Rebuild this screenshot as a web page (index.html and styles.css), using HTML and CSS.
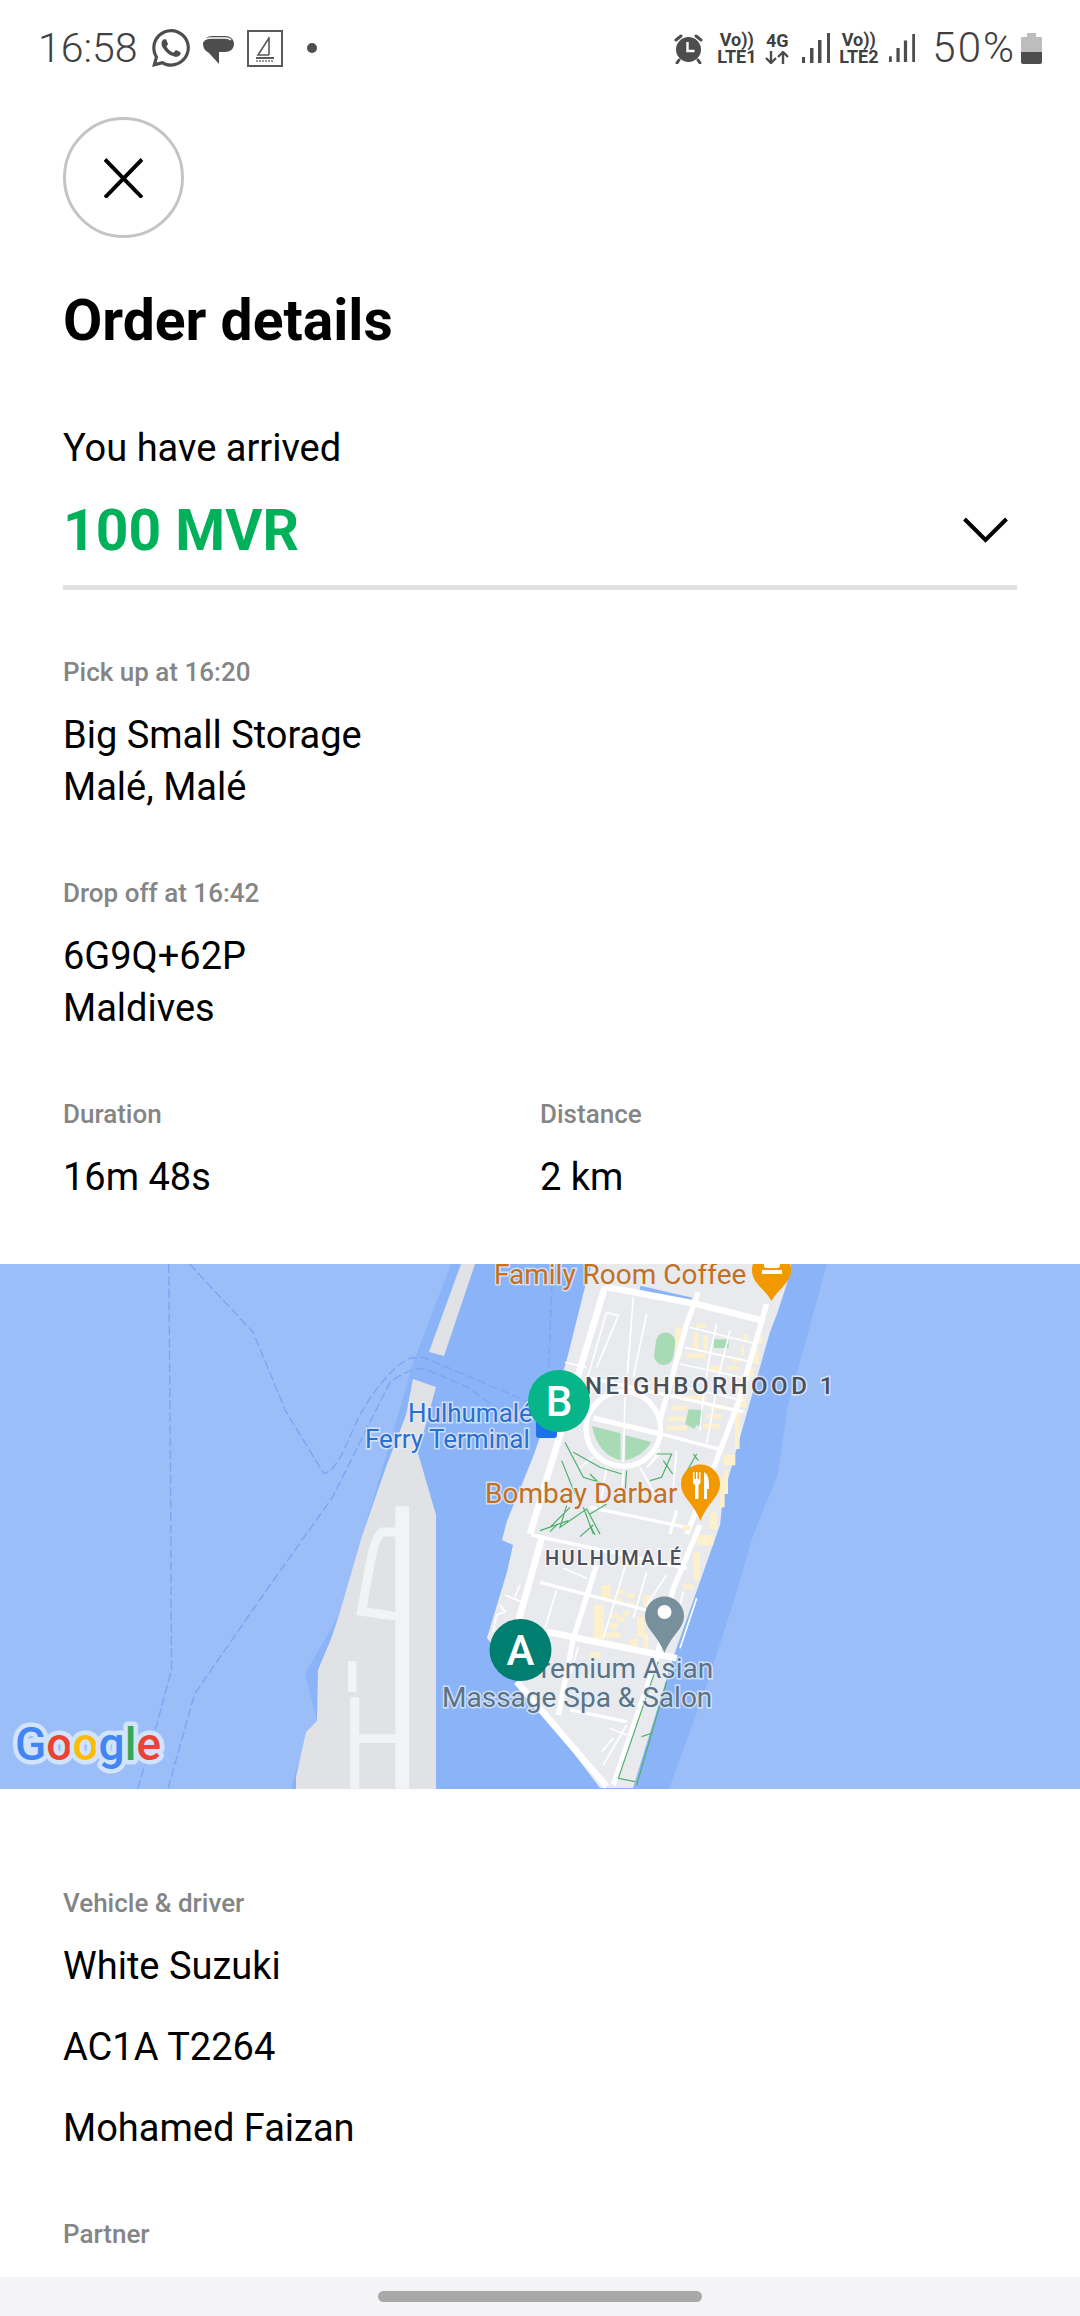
FILE: index.html
```html
<!DOCTYPE html>
<html>
  <head>
    <title>Order details</title>
    <link rel="stylesheet" href="styles.css">
  </head>

  <body>
    <!-- phone status bar -->
    <div class="status">
      <div class="status-left">
        <span class="clock">16:58</span>
        <svg class="ic-wa" viewBox="2 2 20 20"><path fill="#4d4d4d" d="M12.04 2C6.58 2 2.13 6.45 2.13 11.91C2.13 13.66 2.59 15.36 3.45 16.86L2.05 22L7.3 20.62C8.75 21.41 10.38 21.83 12.04 21.83C17.5 21.83 21.95 17.38 21.95 11.92C21.95 9.27 20.92 6.78 19.05 4.91C17.18 3.03 14.69 2 12.04 2M12.05 3.67C14.25 3.67 16.31 4.53 17.87 6.09C19.42 7.65 20.28 9.72 20.28 11.92C20.28 16.46 16.58 20.15 12.04 20.15C10.56 20.15 9.11 19.76 7.85 19L7.55 18.83L4.43 19.65L5.26 16.61L5.06 16.29C4.24 15 3.8 13.47 3.8 11.91C3.81 7.37 7.5 3.67 12.05 3.67M8.53 7.33C8.37 7.33 8.1 7.39 7.87 7.64C7.65 7.89 7 8.5 7 9.71C7 10.93 7.89 12.1 8 12.27C8.14 12.44 9.76 14.94 12.25 16C12.84 16.27 13.3 16.42 13.66 16.53C14.25 16.72 14.79 16.69 15.22 16.63C15.7 16.56 16.68 16.03 16.89 15.45C17.1 14.87 17.1 14.38 17.04 14.27C16.97 14.17 16.81 14.11 16.56 14C16.31 13.86 15.09 13.26 14.87 13.18C14.64 13.1 14.5 13.06 14.31 13.3C14.15 13.55 13.67 14.11 13.53 14.27C13.38 14.44 13.24 14.46 13 14.34C12.74 14.21 11.94 13.95 11 13.11C10.26 12.45 9.77 11.64 9.62 11.39C9.5 11.15 9.61 11 9.73 10.89C9.84 10.78 10 10.6 10.1 10.45C10.23 10.31 10.27 10.2 10.35 10.04C10.43 9.87 10.39 9.73 10.33 9.61C10.27 9.5 9.77 8.26 9.56 7.77C9.36 7.29 9.16 7.35 9 7.34C8.86 7.34 8.7 7.33 8.53 7.33Z"/></svg>
        <svg class="ic-msg" viewBox="0 0 32 32"><path fill="#4d4d4d" d="M10 3h13c5 0 9 3 9 8s-4 8-9 8h-6v12l-10-11C3 18 1 15 1 11c0-5 4-8 9-8z"/><path fill="none" stroke="#fff" stroke-width="1.4" d="M1 9c1-3 4-4 8-4h14c3 0 5 1 6 2"/></svg>
        <svg class="ic-boat" viewBox="0 0 36 37"><rect x="1" y="1" width="34" height="35" fill="#fff" stroke="#5a5a5a" stroke-width="2"/><path fill="none" stroke="#5a5a5a" stroke-width="1.6" d="M22 7v18M22 8 11 25h11"/><path fill="none" stroke="#5a5a5a" stroke-width="2" d="M9 28h18"/><path fill="none" stroke="#9a9a9a" stroke-width="2" stroke-dasharray="2 1" d="M9 31h18"/></svg>
        <span class="dot"></span>
      </div>
      <div class="status-right">
        <svg class="ic-alarm" viewBox="0 0 29 31"><circle cx="14.5" cy="16.5" r="12.5" fill="#4d4d4d"/><path fill="none" stroke="#fff" stroke-width="2.4" d="M13.5 9v9h7"/><path fill="none" stroke="#4d4d4d" stroke-width="3" stroke-linecap="round" d="M2 7l5-4M27 7l-5-4M5 27l-2 3M24 27l2 3"/></svg>
        <div class="net"><span>Vo))</span><span>LTE1</span></div>
        <div class="net net-g">
          <span>4G</span>
          <svg class="arrows" viewBox="0 0 24 13"><path fill="none" stroke="#4d4d4d" stroke-width="2.400" d="M6 0v12M1 7l5 5 5-5M18 13V1M13 6l5-5 5 5"/></svg>
        </div>
        <svg class="ic-sig" viewBox="0 0 28 30"><path fill="#4d4d4d" d="M0 24h3v6H0zM8 15h3.500v15H8zM16 7h3.500v23H16zM25 0h3v30h-3z"/></svg>
        <div class="net net-2"><span>Vo))</span><span>LTE2</span></div>
        <svg class="ic-sig ic-sig2" viewBox="0 0 28 30"><path fill="#4d4d4d" d="M0 24h3v6H0zM8 15h3.500v15H8zM16 7h3.500v23H16zM25 0h3v30h-3z"/></svg>
        <span class="pct">50%</span>
        <svg class="ic-batt" viewBox="0 0 21 31"><path fill="#bdbdbd" d="M6 0h9v4h5a1 1 0 0 1 1 1v14H0V5a1 1 0 0 1 1-1h5z"/><path fill="#4d4d4d" d="M0 19h21v10a2 2 0 0 1-2 2H2a2 2 0 0 1-2-2z"/></svg>
      </div>
    </div>

    <div class="page">
      <div class="top">
        <div class="close">
          <svg viewBox="0 0 40 40"><path fill="none" stroke="#000" stroke-width="4" d="M1 1l38 39M39 1L1 40"/></svg>
        </div>
        <h1 class="title">Order details</h1>
        <div class="arrived">You have arrived</div>
        <div class="price-row">
          <span class="price">100 MVR</span>
          <svg class="chev" viewBox="0 0 44 26"><path fill="none" stroke="#000" stroke-width="4" d="M1 2l21 21L43 2"/></svg>
        </div>
      </div>

      <div class="info">
        <div class="block">
          <div class="label">Pick up at 16:20</div>
          <div class="val">Big Small Storage<br>Malé, Malé</div>
        </div>
        <div class="block">
          <div class="label">Drop off at 16:42</div>
          <div class="val">6G9Q+62P<br>Maldives</div>
        </div>
        <div class="two">
          <div>
            <div class="label">Duration</div>
            <div class="val">16m 48s</div>
          </div>
          <div>
            <div class="label">Distance</div>
            <div class="val">2 km</div>
          </div>
        </div>
      </div>

      <!-- map -->
      <svg class="map" viewBox="0 0 1080 525">
        <rect class="water" width="1080" height="525"/>
        <path class="deep" d="M451 0L413 99L389 182L362 272L339 351L305 410L317 457L296 506L291 525H669L705 426L733 340L753 272L778 210L788 141L827 0z"/>

        <g class="ferry" transform="translate(0 -4.100) scale(.3444)">
          <path d="M490 12L495 600L498 1190L455 1350L400 1535"/>
          <path d="M550 12L735 210L830 440L940 620Q960 620 990 570L1045 450Q1120 320 1190 285L1230 283L1530 410"/>
          <path d="M488 1535L565 1260L780 950L965 690L1055 510L1130 360Q1170 320 1230 315L1360 370L1420 415"/>
          <path d="M1603 70L1593 310"/>
        </g>

        <!-- airport island -->
        <path class="land2" d="M461 0H475L444 92L429 88z"/>
        <path class="land2" d="M413 115L436 123L418 189L436 251V525H296V513L306 468L317 457L318 406L331 375L339 351L362 272L386 203L406 151z"/>
        <g class="apron" transform="translate(0 -4.100) scale(.3444)">
          <path d="M1168 715V1535"/>
          <path d="M1150 790H1110Q1090 800 1075 880L1050 1020L1150 1035"/>
          <path d="M1030 1270V1535M1030 1390H1150"/>
          <path class="apron-b" d="M1010 1210H1035"/>
        </g>

        <!-- hulhumale island -->
        <path class="land" d="M592 0L585 23L566 99L533 193L507 257L502 276L513 281L507 308L500 331L487 374L600 524H633L673 394L720 261L723 233L770 68L777 50L790 10L791 0z"/>

        <g transform="translate(490 0) scale(.3333)">
          <path class="pond" d="M450 72L605 108M640 125L795 165"/>
          <rect class="park" x="495" y="205" width="58" height="98" rx="29" transform="rotate(8 524 254)"/>
          <g class="build">
            <rect x="618" y="178" width="30" height="14"/><rect x="612" y="205" width="14" height="50"/><rect x="640" y="215" width="14" height="50"/>
            <rect x="590" y="268" width="56" height="14"/><rect x="660" y="305" width="34" height="20"/><rect x="725" y="280" width="28" height="14"/>
            <rect x="712" y="305" width="34" height="12"/><rect x="760" y="210" width="14" height="22"/><rect x="752" y="245" width="10" height="28"/>
            <rect x="792" y="255" width="14" height="44"/><rect x="805" y="215" width="12" height="24"/><rect x="775" y="310" width="14" height="30"/>
            <rect x="545" y="425" width="44" height="14"/><rect x="535" y="458" width="50" height="14"/><rect x="530" y="485" width="60" height="14"/>
            <rect x="660" y="422" width="46" height="14"/><rect x="650" y="450" width="44" height="14"/><rect x="640" y="480" width="48" height="14"/>
            <rect x="568" y="395" width="80" height="14"/><rect x="745" y="400" width="24" height="30"/><rect x="735" y="445" width="14" height="110"/>
            <rect x="700" y="572" width="36" height="32"/><rect x="700" y="620" width="14" height="70"/><rect x="660" y="745" width="20" height="50"/>
            <rect x="555" y="190" width="22" height="90"/><rect x="690" y="640" width="14" height="90"/>
          </g>
          <rect class="park" x="672" y="226" width="44" height="26"/>
          <path class="park" d="M586 480L596 436L640 438L634 488L620 484L612 494z"/>
          <path class="road" d="M345 68L120 810"/>
          <path class="road" d="M345 68L620 120L820 170"/>
          <path class="road r2" d="M625 85L590 180L510 470"/>
          <path class="road r2" d="M830 120L810 190L740 430L660 640L590 810"/>
          <circle class="ring" cx="400" cy="495" r="112"/>
          <path class="park" d="M306 486L392 508V588Q325 575 306 486z"/>
          <path class="park" d="M406 514L484 534Q455 580 406 588z"/>
          <path class="road r2" d="M310 462L512 510"/>
          <path class="road r4" d="M405 400L400 595"/>
          <path class="road r3" d="M512 510L690 556"/>
          <path class="road r3" d="M290 340L760 444"/>
          <path class="road r4" d="M600 190L800 240M585 250L790 295M570 300L780 345M545 360L760 410"/>
          <path class="road r4" d="M350 145L385 155L320 310M430 100L412 330M470 150L430 340M350 145L290 350"/>
          <path class="road r4" d="M680 180L660 270L640 400L630 500M720 200L690 320L650 540M225 295L290 310"/>
          <path class="road r3" d="M300 730L590 790M560 740L540 810"/>
          <path class="road r4" d="M450 610L500 700M350 610L330 730M510 555L480 600M560 560L545 720M400 620L395 720M270 610L310 580M470 610L510 570"/>
          <path class="trail" d="M225 535L280 640L345 660M250 565L330 610L395 630M215 590L255 690M300 630L330 660M500 570L545 570L515 640L480 650M520 590L548 630M410 620L405 690M575 650L620 570M610 570L625 590M230 725L210 790L290 735L330 810M280 730L310 810M150 800L235 770M180 790L240 730M350 720L300 750"/>
        </g>

        <g transform="translate(470 261) scale(.3333)">
          <g class="build">
            <rect x="395" y="180" width="26" height="44"/><rect x="440" y="195" width="24" height="14"/><rect x="470" y="205" width="24" height="14"/>
            <rect x="430" y="218" width="26" height="14"/><rect x="470" y="232" width="24" height="14"/><rect x="372" y="240" width="30" height="105"/>
            <rect x="420" y="265" width="26" height="14"/><rect x="460" y="258" width="20" height="14"/><rect x="418" y="295" width="26" height="16"/>
            <rect x="440" y="275" width="24" height="14"/><rect x="408" y="322" width="44" height="16"/><rect x="502" y="275" width="22" height="60"/>
            <rect x="480" y="342" width="24" height="36"/><rect x="398" y="346" width="22" height="12"/><rect x="360" y="380" width="30" height="20"/>
            <rect x="520" y="210" width="20" height="36"/><rect x="680" y="30" width="50" height="30"/><rect x="670" y="80" width="20" height="85"/>
            <rect x="640" y="178" width="32" height="14"/><rect x="640" y="0" width="20" height="16"/><rect x="520" y="325" width="14" height="60"/>
          </g>
          <path class="road" d="M215 40L145 290"/>
          <path class="road r2" d="M380 120L310 340L265 570"/>
          <path class="road r2" d="M690 0L610 190L560 400L430 780"/>
          <path class="road" d="M140 470L410 785"/>
          <path class="road r3" d="M185 30L650 130"/>
          <path class="road r3" d="M210 172L540 258"/>
          <path class="road" d="M230 320L620 400"/>
          <path class="road r3" d="M300 555L470 590"/>
          <path class="road r4" d="M260 195L225 310M470 110L400 340M530 140L490 280M280 130L350 160M590 150L530 240M105 210L165 235M150 180L135 215M90 240L105 260L80 270L70 320"/>
          <path class="road r4" d="M470 600L400 720M420 610L470 630M395 680L430 640"/>
          <path class="road r4" d="M325 365L300 450M640 200L605 340M680 220L630 370"/>
          <path class="trail" d="M240 20L260 0M330 35L370 0M360 0L375 30M565 410L445 760L495 770M590 470L500 780M515 635L545 625"/>
        </g>

        <!-- map labels -->
        <text class="lbl food" x="494" y="20">Family Room Coffee</text>
        <path class="pin-o" d="M752 6a19.500 19.500 0 0 1 39 0c0 13-12 18-19.500 31C764 24 752 19 752 6z"/>
        <path class="glyph" d="M762 6h20v4h-20zM764 0h16v2q-1 2-3 2h-10q-3 0-3-2z"/>
        <text class="lbl blue" x="408" y="158">Hulhumalé</text>
        <text class="lbl blue" x="365" y="184">Ferry Terminal</text>
        <rect x="536" y="156" width="21" height="18" rx="3" fill="#1a73e8"/>
        <text class="lbl food" x="485" y="239">Bombay Darbar</text>
        <text class="area area-b" x="585" y="130">NEIGHBORHOOD 1</text>
        <text class="area area-s" x="545" y="301">HULHUMALÉ</text>
        <text class="lbl slate" x="523" y="414">Premium Asian</text>
        <text class="lbl slate" x="442" y="443">Massage Spa &amp; Salon</text>

        <!-- pins -->
        <path class="pin-o" d="M681 220a19.500 19.500 0 0 1 39 0c0 13-12 18-19.500 37C693 238 681 233 681 220z"/>
        <path class="glyph" d="M693 208h1.500v7h1.500v-7h1.500v7h1.500v-7h1.500v10q0 2-2 3v14h-3.500v-14q-2-1-2-3zM704 208q5 2 5 14v3h-2v10h-3z"/>
        <path class="pin-g" d="M645 352a19.500 19.500 0 0 1 39 0c0 13-12 18-19.500 37C657 370 645 365 645 352z"/>
        <circle cx="664.500" cy="348" r="7" fill="#fff"/>

        <circle cx="520.500" cy="386" r="31" fill="#007e70"/>
        <text class="mark" x="520.500" y="401">A</text>
        <circle cx="559" cy="137" r="31" fill="#07b58a"/>
        <text class="mark" x="559" y="152">B</text>

        <text class="goog" transform="translate(15 496)"><tspan fill="#4285f4">G</tspan><tspan fill="#ea4335">o</tspan><tspan fill="#fbbc05">o</tspan><tspan fill="#4285f4">g</tspan><tspan fill="#34a853">l</tspan><tspan fill="#ea4335">e</tspan></text>
      </svg>

      <div class="info info-b">
        <div class="label">Vehicle &amp; driver</div>
        <div class="val val-row">White Suzuki</div>
        <div class="val val-row">AC1A T2264</div>
        <div class="val val-row">Mohamed Faizan</div>
        <div class="label partner">Partner</div>
      </div>
    </div>

    <div class="navbar"><span class="pill"></span></div>
  </body>
</html>
```

FILE: styles.css
```css
* {
  box-sizing: border-box;
}

html,
body {
  margin: 0;
  height: 2316px;
  overflow: hidden;
}

body {
  background-color: #fff;
  color: #000;
  font-family: Roboto, "Liberation Sans", sans-serif;
  display: flex;
  flex-direction: column;
}

/* status bar */
.status {
  height: 100px;
  padding: 29px 38px 0 38px;
  display: flex;
  justify-content: space-between;
  align-items: flex-start;
  color: #404040;
  flex-shrink: 0;
}

.status-left,
.status-right {
  display: flex;
  align-items: center;
  height: 38px;
}

.clock {
  font-size: 41px;
  font-weight: 300;
  margin-right: 14px;
}

.ic-wa {
  width: 38px;
  height: 38px;
  margin-right: 12px;
}

.ic-msg {
  width: 32px;
  height: 32px;
  margin: 2px 13px 0 0;
}

.ic-boat {
  width: 36px;
  height: 37px;
}

.dot {
  width: 10px;
  height: 10px;
  border-radius: 50%;
  background-color: #4d4d4d;
  margin-left: 24px;
}

.ic-alarm {
  width: 29px;
  height: 31px;
  margin-right: 14px;
}

.net {
  width: 39px;
  display: flex;
  flex-direction: column;
  align-items: center;
  font-size: 18px;
  font-weight: 700;
  line-height: 17px;
  margin-right: 9px;
}

.net-g {
  width: 24px;
  margin-right: 13px;
}

.net-2 {
  margin: 0 11px 0 9px;
}

.arrows {
  width: 24px;
  height: 13px;
  margin-top: 2px;
}

.ic-sig {
  width: 28px;
  height: 30px;
}

.ic-sig2 {
  width: 26px;
}

.pct {
  font-size: 42px;
  font-weight: 300;
  letter-spacing: 2px;
  margin: 0 5px 0 17px;
  line-height: 38px;
}

.ic-batt {
  width: 21px;
  height: 31px;
}

/* page */
.page {
  flex: 1;
  overflow: hidden;
}

.top {
  padding: 17px 63px 0 63px;
}

.close {
  width: 121px;
  height: 121px;
  border: 3px solid #c4c4c4;
  border-radius: 50%;
  display: flex;
  align-items: center;
  justify-content: center;
}

.close svg {
  width: 39px;
  height: 40px;
}

.title {
  margin: 50px 0 0 0;
  font-size: 57px;
  font-weight: 700;
  line-height: 66px;
}

.arrived {
  margin-top: 71px;
  font-size: 38px;
  line-height: 46px;
}

.price-row {
  display: flex;
  justify-content: space-between;
  align-items: center;
  height: 66px;
  margin-top: 26px;
  padding-right: 9px;
  margin-bottom: 22px;
}

.price {
  font-size: 57px;
  font-weight: 700;
  color: #00b15a;
}

.chev {
  width: 45px;
  height: 26px;
}

.info {
  border-top: 5px solid #e0e0e0;
  margin: 0 63px;
  padding-top: 64px;
}

.block {
  margin-bottom: 62px;
}

.label {
  font-size: 26px;
  font-weight: 500;
  line-height: 36px;
  color: #858585;
}

.val {
  margin-top: 19px;
  font-size: 38px;
  line-height: 52px;
}

.two {
  display: grid;
  grid-template-columns: 477px 1fr;
}

.map {
  display: block;
  width: 1080px;
  height: 525px;
  margin-top: 61px;
}

.info-b {
  border-top: 0;
  padding-top: 96px;
}

.info-b .val-row {
  margin-top: 0;
  margin-bottom: 29px;
}

.info-b .label {
  margin-bottom: 19px;
}

.info-b .label.partner {
  margin-top: 62px;
}

/* bottom bar */
.navbar {
  height: 39px;
  flex-shrink: 0;
  background-color: #f4f4f6;
  display: flex;
  justify-content: center;
  padding-top: 14px;
}

.pill {
  width: 324px;
  height: 11px;
  border-radius: 6px;
  background-color: #a8a8a8;
}

/* map shapes */
.water { fill: #9bbef9; }
.deep { fill: #8ab4f7; }
.land { fill: #e8eaed; }
.land2 { fill: #e0e2e6; }
.park { fill: #a8dab5; }
.build rect { fill: #fdf0cd; }
.pond { fill: none; stroke: #8ab4f7; stroke-width: 14; }

.ferry path {
  fill: none;
  stroke: #78a6f2;
  stroke-width: 4;
  stroke-dasharray: 26 10;
}

.apron path {
  fill: none;
  stroke: #f1f3f4;
  stroke-width: 40;
}

.apron path + path {
  stroke-width: 26;
}

.apron .apron-b {
  stroke-width: 90;
}

.road {
  fill: none;
  stroke: #fff;
  stroke-width: 20;
}

.r2 { stroke-width: 16; }
.r3 { stroke-width: 10; }
.r4 { stroke-width: 5; }

.ring {
  fill: #e8eaed;
  stroke: #fff;
  stroke-width: 16;
}

.trail {
  fill: none;
  stroke: #4caf6a;
  stroke-width: 3.500;
}

.lbl {
  font-size: 28px;
  paint-order: stroke;
  stroke: #e6eefb;
  stroke-width: 3px;
  stroke-opacity: .75;
}

.food { fill: #c5701d; }
.blue { fill: #2a6fce; font-size: 26px; }
.slate { fill: #5b7383; }

.area {
  font-weight: 500;
  fill: #4a4f5a;
  paint-order: stroke;
  stroke: #fff;
  stroke-width: 3px;
  stroke-opacity: .6;
}

.area-b {
  font-size: 24px;
  letter-spacing: 3.500px;
}

.area-s {
  font-size: 20px;
  letter-spacing: 2.200px;
}

.pin-o { fill: #f29900; }
.pin-g { fill: #78909c; }
.glyph { fill: #fff; }

.mark {
  font-size: 42px;
  font-weight: 500;
  fill: #fff;
  text-anchor: middle;
}

.goog {
  font-size: 46px;
  font-weight: 500;
  paint-order: stroke;
  stroke: #d2e3fc;
  stroke-width: 9px;
  stroke-linejoin: round;
}
```
